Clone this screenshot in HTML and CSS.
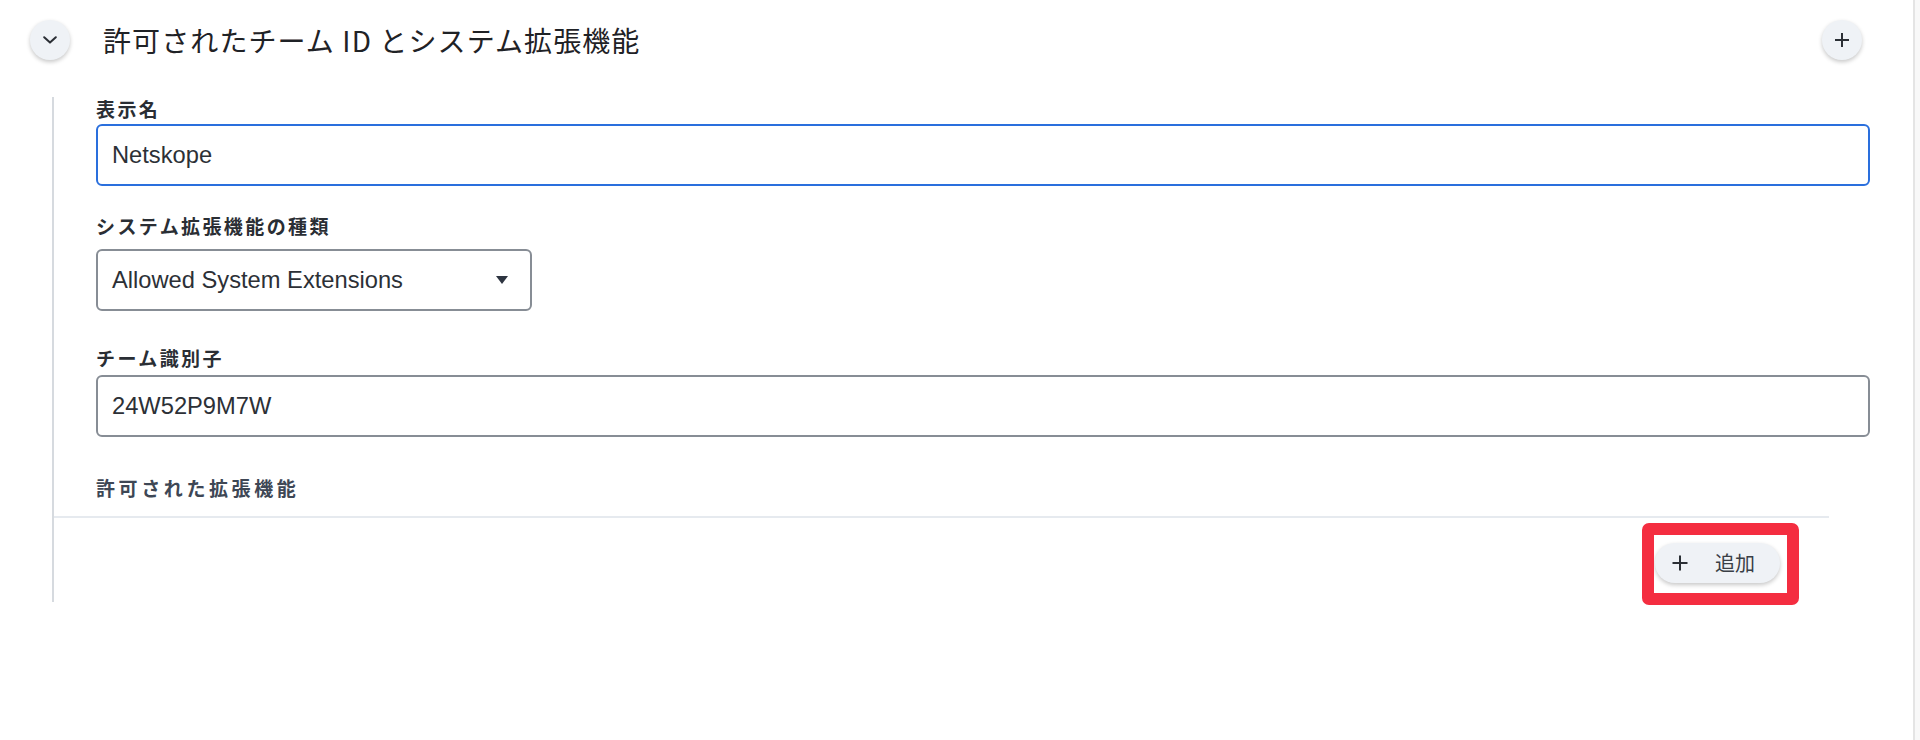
FILE: index.html
```html
<!DOCTYPE html>
<html lang="ja">
<head>
<meta charset="utf-8">
<title>許可されたチーム ID とシステム拡張機能</title>
<link rel="stylesheet" href="styles.css">
</head>
<body>
<div class="page">
  <main class="main">
    <header class="header">
      <button class="circle-btn" aria-label="折りたたむ">
        <svg width="14" height="8" viewBox="0 0 14 8"><polyline points="1.2,1.2 7,6.6 12.8,1.2" fill="none" stroke="#2b2f35" stroke-width="2" stroke-linecap="round" stroke-linejoin="round"/></svg>
      </button>
      <h1 class="title">許可されたチーム ID とシステム拡張機能</h1>
      <button class="circle-btn circle-btn--right" aria-label="追加">
        <svg width="16" height="16" viewBox="0 0 16 16"><path d="M8 1v14M1 8h14" stroke="#2b2f35" stroke-width="2" fill="none"/></svg>
      </button>
    </header>

    <section class="section">
      <div class="fields">
        <label class="label">表示名</label>
        <div class="input input--focus input--first">Netskope</div>

        <label class="label label--second">システム拡張機能の種類</label>
        <div class="select">
          <span>Allowed System Extensions</span>
          <span class="caret"></span>
        </div>

        <label class="label label--third">チーム識別子</label>
        <div class="input input--third">24W52P9M7W</div>

        <div class="sublabel">許可された拡張機能</div>
      </div>
      <div class="divider"></div>
      <div class="actions">
        <button class="add-btn">
          <svg width="16" height="16" viewBox="0 0 16 16"><path d="M8 0.5v15M0.5 8h15" stroke="#2b2f35" stroke-width="2" fill="none"/></svg>
          <span class="add-text">追加</span>
          <span class="highlight"></span>
        </button>
      </div>
    </section>
  </main>
  <div class="edge"></div>
</div>
</body>
</html>
```

FILE: styles.css
```css
* { box-sizing: border-box; }

html, body {
  margin: 0;
  padding: 0;
  background: #ffffff;
}

body {
  font-family: "Liberation Sans", "Noto Sans CJK JP", sans-serif;
  color: #2c3036;
}

.page {
  display: flex;
  width: 1920px;
  height: 740px;
  overflow: hidden;
}

.main {
  flex: 1;
  min-width: 0;
}

.edge {
  width: 7px;
  border-left: 2px solid #e4e4e4;
  background: #f8f8f8;
}

.header {
  display: flex;
  align-items: center;
  height: 40px;
  margin-top: 20px;
  padding-left: 30px;
  padding-right: 51px;
}

.circle-btn {
  width: 40px;
  height: 40px;
  border: none;
  border-radius: 50%;
  background: #eff2f6;
  box-shadow: 0 2px 4px rgba(0, 0, 0, 0.22);
  display: flex;
  align-items: center;
  justify-content: center;
  padding: 0;
  flex: none;
}

.circle-btn--right {
  margin-left: auto;
}

.title {
  margin: 0 0 0 33px;
  font-family: "Noto Sans CJK JP", sans-serif;
  font-weight: 400;
  font-size: 28px;
  letter-spacing: 1.1px;
  line-height: 40px;
  color: #1f2226;
}

.section {
  margin-top: 37px;
  margin-left: 52px;
  border-left: 2px solid #d6dadf;
}

.fields {
  display: flex;
  flex-direction: column;
  align-items: flex-start;
  padding: 0 43px 0 42px;
}

.label {
  font-family: "Noto Sans CJK JP", sans-serif;
  font-weight: 700;
  font-size: 19px;
  line-height: 24px;
  letter-spacing: 2.4px;
  color: #2a2e34;
}

.label--second { margin-top: 28px; }
.label--third { margin-top: 35px; }

.input {
  align-self: stretch;
  height: 62px;
  display: flex;
  align-items: center;
  padding: 0 14px;
  border: 2px solid #878d95;
  border-radius: 6px;
  font-family: "Liberation Sans", sans-serif;
  font-size: 23.7px;
  color: #2c3036;
}

.input--focus {
  border-color: #2a6fdd;
}

.input--first { margin-top: 3px; }
.input--third { margin-top: 5px; }

.select {
  margin-top: 11px;
  width: 436px;
  height: 62px;
  display: flex;
  align-items: center;
  justify-content: space-between;
  padding: 0 22px 0 14px;
  border: 2px solid #878d95;
  border-radius: 6px;
  font-family: "Liberation Sans", sans-serif;
  font-size: 23.7px;
  color: #2c3036;
}

.caret {
  width: 0;
  height: 0;
  border-left: 6.5px solid transparent;
  border-right: 6.5px solid transparent;
  border-top: 8px solid #2d3440;
}

.sublabel {
  margin-top: 39px;
  font-family: "Noto Sans CJK JP", sans-serif;
  font-weight: 700;
  font-size: 19px;
  line-height: 24px;
  letter-spacing: 3.6px;
  color: #3e4755;
}

.divider {
  margin-top: 16px;
  margin-right: 84px;
  height: 2px;
  background: #e6eaef;
}

.actions {
  display: flex;
  justify-content: flex-end;
  padding: 25px 133px 19px 0;
}

.add-btn {
  position: relative;
  display: flex;
  align-items: center;
  width: 125px;
  height: 40px;
  padding: 0 0 0 17px;
  border: none;
  border-radius: 20px;
  background: #eff2f6;
  box-shadow: 0 2px 4px rgba(0, 0, 0, 0.22);
  font-family: "Noto Sans CJK JP", sans-serif;
  font-size: 20px;
  color: #3a3f46;
}

.add-text {
  margin-left: 27px;
  line-height: 24px;
}

.highlight {
  position: absolute;
  top: -20px;
  left: -13px;
  right: -19px;
  bottom: -22px;
  border: 12px solid #f42d40;
  border-radius: 7px;
  pointer-events: none;
}
```
